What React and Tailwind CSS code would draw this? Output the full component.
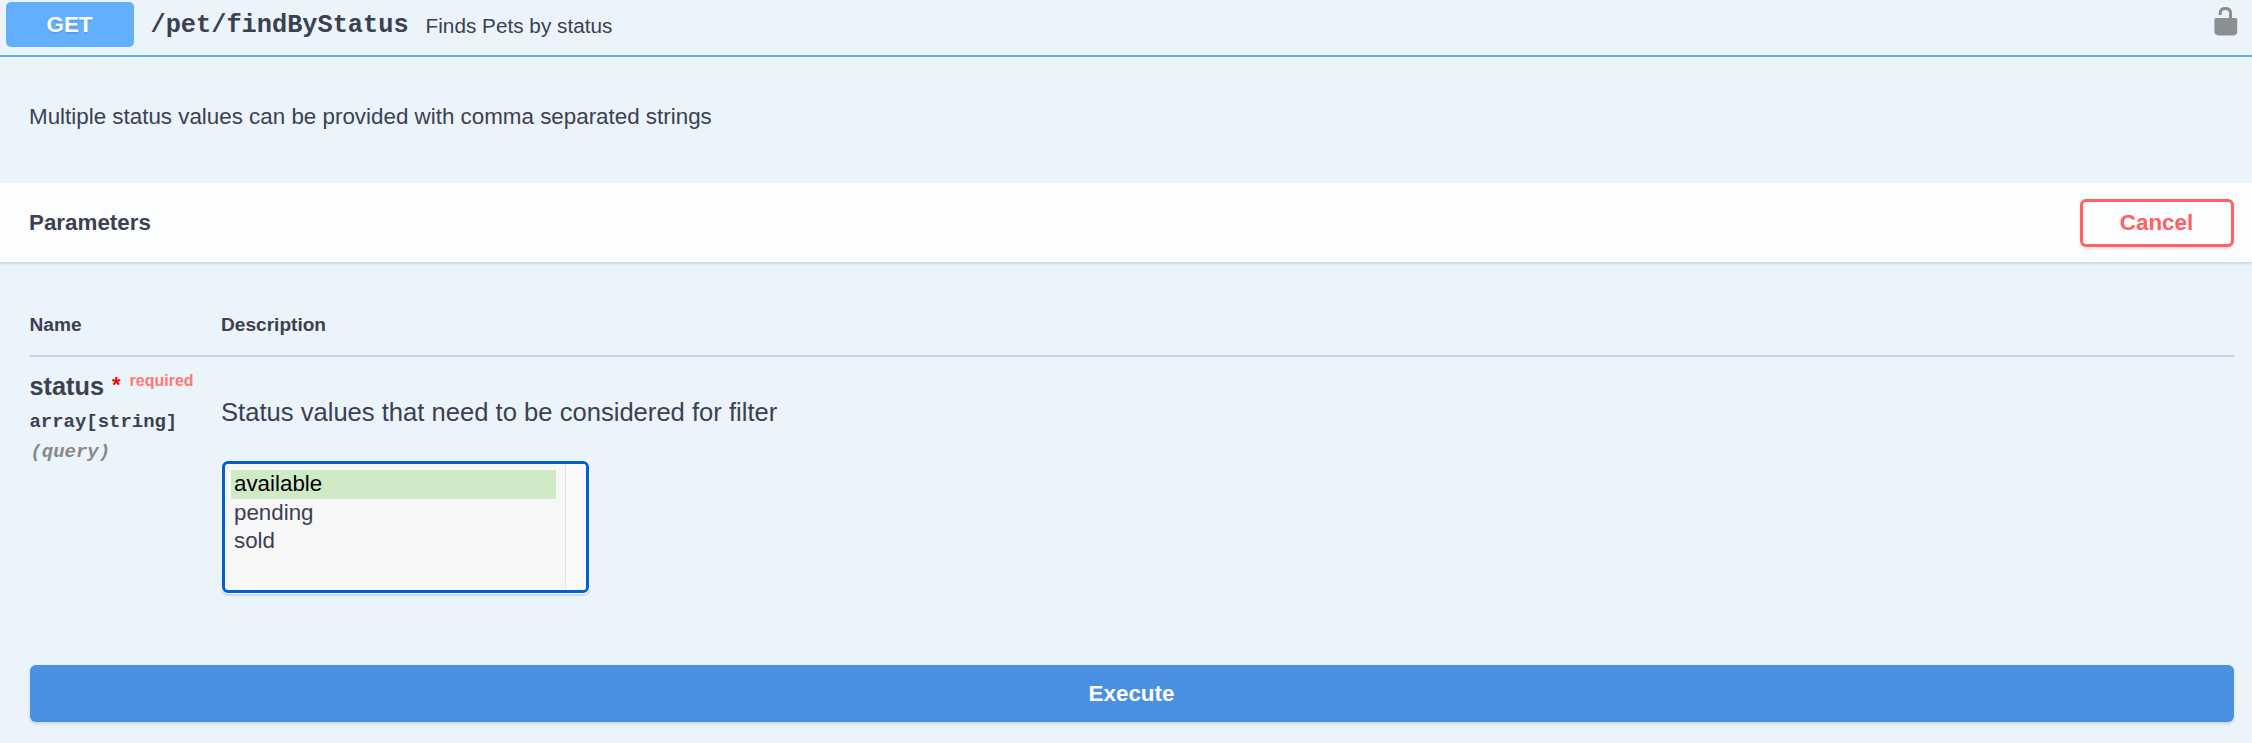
const options = ["available", "pending", "sold"];

function UnlockIcon() {
  return (
    <svg viewBox="0 0 24 30" className="h-[30px] w-6" fill="none">
      <path d="M6.2 9V6.8C6.4 3.8 8.6 2.4 11.4 2.4S16.4 3.8 16.5 6.8V13" stroke="#8c8f92" strokeWidth="3" />
      <path
        d="M2 12H21.6Q23.2 12 23.2 13.6V26.4Q22.6 28.8 19.8 29.4H4.4Q1 28.8.4 26.4V13.6Q.4 12 2 12Z"
        fill="#8c8f92"
      />
    </svg>
  );
}

function Summary() {
  return (
    <header className="flex h-[57px] items-start border-b-2 border-[#61affe] pl-[5.5px] pr-[14px] pt-[2px]">
      <span className="flex h-[45px] w-[128px] items-center justify-center rounded-[5px] bg-[#61affe] text-[22.4px] font-bold text-white [text-shadow:0_1.5px_0_rgba(0,0,0,0.1)]">
        GET
      </span>
      <div className="flex h-[47px] items-center pl-[17px]">
        <span className="font-[Liberation_Mono,monospace] text-[25.3px] font-bold">/pet/findByStatus</span>
        <span className="pl-[17px] text-[20.75px]">Finds Pets by status</span>
      </div>
      <button className="ml-auto pt-[4px]" aria-label="Authorize">
        <UnlockIcon />
      </button>
    </header>
  );
}

function StatusSelect() {
  return (
    <div className="ml-px flex h-[132px] w-[367px] overflow-hidden rounded-[6px] border-3 border-[#0060d0] bg-[#f7f7f7] shadow-[0_0_0_1px_#f8fafc,0_2px_1px_1px_rgba(0,0,0,0.12)]">
      <ul className="w-[340px] pl-[6px] pr-[9px] pt-[6px] text-[22.35px] leading-[28.7px]">
        {options.map((o, i) => (
          <li key={o} className={i === 0 ? "bg-[#d0eac8] pl-[3px] text-black" : "pl-[3px]"}>
            {o}
          </li>
        ))}
      </ul>
      <div className="flex-1 border-l border-[#e5e5e5] bg-[#fafafa]" />
    </div>
  );
}

export default function App() {
  return (
    <main className="flex h-[743px] w-full flex-col overflow-hidden bg-[#ebf3fb] font-[Liberation_Sans,Arial,sans-serif] text-[#3b4151]">
      <Summary />
      <p className="flex h-[126px] items-center pb-[6px] pl-[29px] text-[22.38px]">
        Multiple status values can be provided with comma separated strings
      </p>
      <div className="flex h-[79px] shrink-0 items-center justify-between bg-[#fcfdff] pl-[29px] pr-[18.5px] shadow-[0_1.5px_3px_rgba(0,0,0,0.15)]">
        <h4 className="text-[22.38px] font-bold">Parameters</h4>
        <button className="flex h-[48px] w-[154px] items-center justify-center rounded-[6px] border-3 border-[#ff6060] text-[22.38px] font-bold text-[#ff6060] shadow-[0_1.5px_3px_rgba(0,0,0,0.1)]">
          Cancel
        </button>
      </div>
      <section className="flex flex-1 flex-col pl-[29.5px] pr-[18.5px]">
        <div className="flex h-[95px] border-b-2 border-[#c8d1de] pt-[51px] text-[19.1px] leading-6 font-bold">
          <span className="w-[191.5px]">Name</span>
          <span>Description</span>
        </div>
        <div className="flex h-[308px]">
          <div className="w-[191.5px] pt-[12px] font-bold">
            <div className="flex h-[34px] whitespace-nowrap text-[25.3px] leading-[34px]">
              <span>status</span>
              <span className="pl-[8px] text-[22px] leading-[32px] text-[#ff0000]">*</span>
              <span className="pl-[9px] text-[16px] leading-[23px] text-[#ff7875]">required</span>
            </div>
            <div className="pt-[4px] font-[Liberation_Mono,monospace] text-[18.95px] leading-[30px]">
              <div>array[string]</div>
              <div className="pl-px italic text-[#888888]">(query)</div>
            </div>
          </div>
          <div>
            <p className="h-[104px] pt-[39px] text-[25.6px] leading-[32px]">
              Status values that need to be considered for filter
            </p>
            <StatusSelect />
          </div>
        </div>
        <button className="h-[57px] w-full rounded-[6px] bg-[#4990e2] text-[22.38px] font-bold text-white shadow-[0_1.5px_3px_rgba(0,0,0,0.12)]">
          Execute
        </button>
      </section>
    </main>
  );
}
